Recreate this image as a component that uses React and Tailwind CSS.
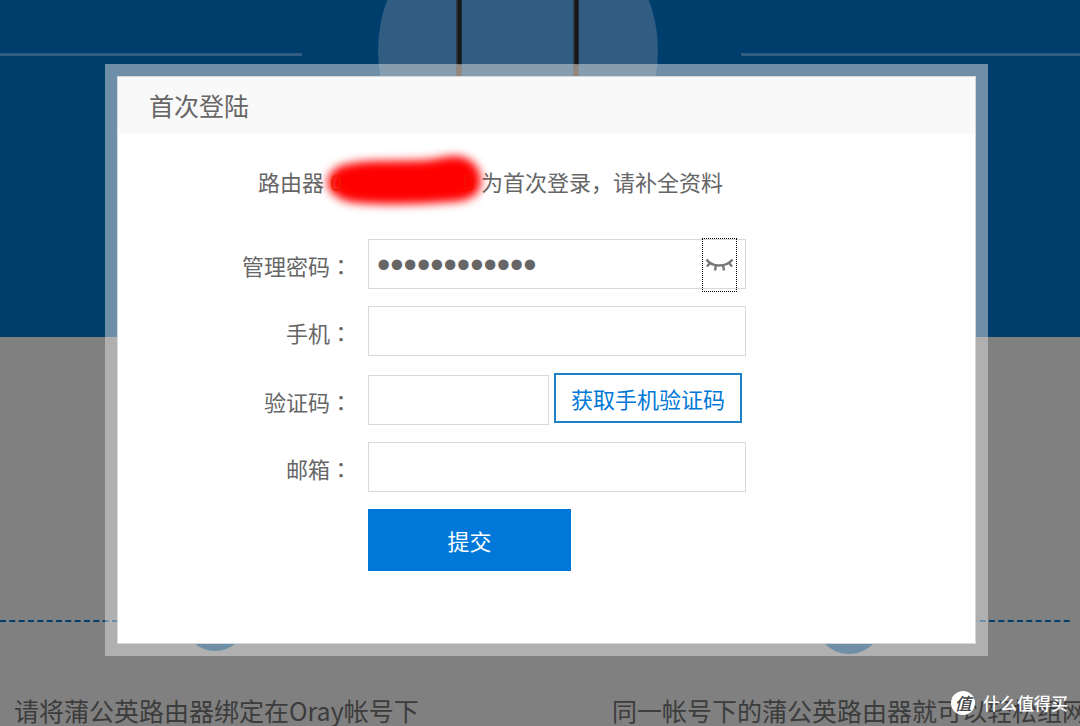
import { useState } from "react";

function Field({ id, label, children }) {
  return (
    <div className="flex items-end">
      <label
        htmlFor={id}
        className="h-[50px] w-[237px] shrink-0 pr-4 text-right text-[22px] leading-[52px] text-[#666]"
      >
        {label}
        <span className="font-['Noto_Sans_CJK_TC',sans-serif]">：</span>
      </label>
      {children}
    </div>
  );
}

function ClosedEye() {
  return (
    <svg viewBox="0 0 30 16" className="h-4 w-[30px]" fill="none" stroke="#777" strokeWidth="2.4">
      <path d="M1.500 2.500C7 10.500 21 10.500 27.500 2.500" />
      <path d="M5.500 5.500L2 9.500M11 8L10 13.500M18 8L19 13.500M23.500 5.500L27 9.500" />
    </svg>
  );
}

function Hero() {
  return (
    <section className="flex h-[337px] items-start overflow-hidden bg-[#003e6e]">
      <div className="mt-[53px] h-[3px] w-[28%] bg-[#305d81]" />
      <svg viewBox="0 0 280 280" className="-mt-[90px] mr-[83px] ml-[76px] size-[280px] shrink-0">
        <circle cx="140" cy="140" r="140" fill="#305d81" />
        <path d="M81 60V162M198 60V162" stroke="#333c44" strokeWidth="6" />
        <path d="M81.500 60V162M198.500 60V162" stroke="#16181a" strokeWidth="4" />
        <path d="M81 155V180M198 155V180" stroke="#4a3325" strokeWidth="6" />
      </svg>
      <div className="mt-[53px] h-[3px] flex-1 bg-[#305d81]" />
    </section>
  );
}

function Steps() {
  return (
    <section className="pt-[249px] text-[25px] leading-8 text-[#3c3c3c]">
      <div className="relative grid h-[68px] grid-cols-[612px_1fr] items-center">
        <svg className="absolute top-[34px] left-0 h-0.5 w-full pr-2">
          <path d="M0 1H2000" stroke="#003e6e" strokeWidth="2" strokeDasharray="6 3.330" />
        </svg>
        <div className="relative ml-[184px] size-[62px] rounded-full bg-[#00406f]" />
        <div className="relative ml-[203px] size-[68px] rounded-full bg-[#00406f]" />
      </div>
      <div className="mt-10 grid grid-cols-[598px_1fr] pl-3.5 whitespace-nowrap">
        <p>请将蒲公英路由器绑定在Oray帐号下</p>
        <p>同一帐号下的蒲公英路由器就可以轻松组网</p>
      </div>
    </section>
  );
}

function LoginDialog() {
  const [password, setPassword] = useState("admin1234567");
  const [visible, setVisible] = useState(false);
  const box = "h-[50px] border border-[#d9d9d9] bg-white px-2 text-[#666] outline-none";

  return (
    <div role="dialog" aria-labelledby="dialog-title" className="w-full bg-[#e2e2e2]/49 p-3">
      <div className="border border-[#d3d8dc] bg-white pb-[72px]">
        <h1 id="dialog-title" className="bg-[#f9f9f9] px-[31px] text-[25px] leading-[57px] text-[#666]">
          首次登陆
        </h1>
        <p className="flex pt-[31px] pl-[140px] text-[22px] leading-8 whitespace-nowrap text-[#666]">
          路由器
          <span className="relative mx-1.5 flex w-[145px] justify-between">
            <svg viewBox="0 0 186 80" className="absolute -top-6 -left-5 h-20 w-[186px]">
              <defs>
                <filter id="soft" x="-20%" y="-30%" width="140%" height="160%">
                  <feGaussianBlur stdDeviation="5" />
                </filter>
              </defs>
              <path
                d="M38 23C60 18 90 21 118 19C130 18 142 13 152 16C168 20 173 35 170 46C167 58 150 61 138 61C100 64 62 64 40 61C25 57 16 48 18 40C19 31 26 25 38 23Z"
                fill="#f00"
                filter="url(#soft)"
              />
            </svg>
            <span className="relative text-[#f01c00]">0</span>
            <span className="relative text-[#f61000]">0</span>
          </span>
          为首次登录，请补全资料
        </p>
        <form className="flex flex-col gap-[17px] pt-[42px] pl-[13px]" onSubmit={(e) => e.preventDefault()}>
          <Field id="password" label="管理密码">
            <div className="relative w-[378px]">
              <input
                id="password"
                type={visible ? "text" : "password"}
                value={password}
                onChange={(e) => setPassword(e.target.value)}
                className={
                  box + " block w-full pt-0.5 pr-12 font-['Liberation_Sans',sans-serif] " + (visible ? "text-[22px]" : "text-[38px]")
                }
              />
              <button
                type="button"
                aria-label="显示密码"
                onClick={() => setVisible(!visible)}
                className="absolute -top-px right-[9px] flex h-[54px] w-[35px] items-center justify-center border border-dotted border-black"
              >
                <ClosedEye />
              </button>
            </div>
          </Field>
          <Field id="phone" label="手机">
            <input id="phone" type="tel" className={box + " w-[378px] text-[22px]"} />
          </Field>
          <Field id="code" label="验证码">
            <div className="flex h-[52px] gap-[5px]">
              <input id="code" className={box + " w-[181px] self-end text-[22px]"} />
              <button
                type="button"
                className="h-[50px] w-[188px] border-2 border-[#1f7fc4] bg-white text-[22px] text-[#0078d7]"
              >
                获取手机验证码
              </button>
            </div>
          </Field>
          <Field id="email" label="邮箱">
            <input id="email" type="email" className={box + " w-[378px] text-[22px]"} />
          </Field>
          <button type="submit" className="ml-[237px] h-[62px] w-[203px] bg-[#0078d9] text-[22px] text-white">
            提交
          </button>
        </form>
      </div>
    </div>
  );
}

export default function App() {
  return (
    <div className="relative h-screen overflow-hidden bg-[#808080] font-['Noto_Sans_CJK_SC',sans-serif]">
      <Hero />
      <Steps />
      <div className="absolute inset-0 flex items-start pt-16 pr-[92px] pl-[105px]">
        <LoginDialog />
      </div>
      <div className="absolute right-3 bottom-[11px] flex items-center gap-2 text-[17px] leading-6 font-medium text-white">
        <span className="flex size-6 items-center justify-center rounded-full bg-white text-[17px] text-[#444] italic">值</span>
        什么值得买
      </div>
    </div>
  );
}
